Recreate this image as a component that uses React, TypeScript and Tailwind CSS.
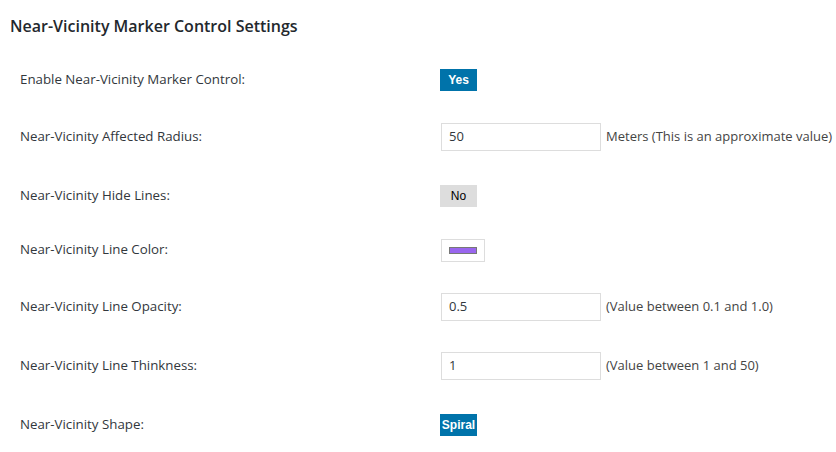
import React from "react";

const font = { fontFamily: '"Segoe UI", "Open Sans", "Noto Sans", sans-serif' };
const arial = { fontFamily: '"Liberation Sans", Arial, sans-serif' };

function Row({ h, label, children }: { h: string; label: string; children: React.ReactNode }) {
  return (
    <div className={`flex items-center ${h}`}>
      <div className="w-[440px] shrink-0 pl-[20px] text-[13.3px] text-[#32373c]">{label}</div>
      <div className="flex items-center">{children}</div>
    </div>
  );
}

function Input({ value }: { value: string }) {
  return (
    <div className="ml-[1px] flex h-[28px] w-[160px] items-center border border-[#dddddd] bg-white px-[7px] text-[13px] text-[#32373c]">
      {value}
    </div>
  );
}

function Note({ children }: { children: React.ReactNode }) {
  return <span className="ml-[5px] whitespace-nowrap text-[13px] text-[#444]">{children}</span>;
}

export default function App() {
  return (
    <div className="h-[452px] w-[836px] overflow-hidden bg-white" style={font}>
      <div className="flex h-[52px] items-center pl-[10px]">
        <h2 className="text-[16px] font-semibold text-[#23282d]">Near-Vicinity Marker Control Settings</h2>
      </div>
      <Row h="h-[56px]" label="Enable Near-Vicinity Marker Control:">
        <span className="flex h-[22px] w-[37px] items-center justify-center bg-[#0073aa] text-[12px] font-bold text-white" style={arial}>
          Yes
        </span>
      </Row>
      <Row h="h-[58px]" label="Near-Vicinity Affected Radius:">
        <Input value="50" />
        <Note>Meters (This is an approximate value)</Note>
      </Row>
      <Row h="h-[60px]" label="Near-Vicinity Hide Lines:">
        <span className="flex h-[22px] w-[37px] items-center justify-center bg-[#dddddd] text-[12px] text-black" style={arial}>
          No
        </span>
      </Row>
      <Row h="h-[48px]" label="Near-Vicinity Line Color:">
        <div className="ml-[1px] flex h-[23px] w-[44px] items-center justify-center border border-[#dddddd] bg-white">
          <div className="h-[7px] w-[28px] border border-[#777] bg-[#9966ee]" />
        </div>
      </Row>
      <Row h="h-[66px]" label="Near-Vicinity Line Opacity:">
        <Input value="0.5" />
        <Note>(Value between 0.1 and 1.0)</Note>
      </Row>
      <Row h="h-[52px]" label="Near-Vicinity Line Thinkness:">
        <Input value="1" />
        <Note>(Value between 1 and 50)</Note>
      </Row>
      <Row h="h-[66px]" label="Near-Vicinity Shape:">
        <span className="flex h-[22px] w-[37px] items-center justify-center bg-[#0073aa] text-[12px] font-bold text-white" style={arial}>
          Spiral
        </span>
      </Row>
    </div>
  );
}
